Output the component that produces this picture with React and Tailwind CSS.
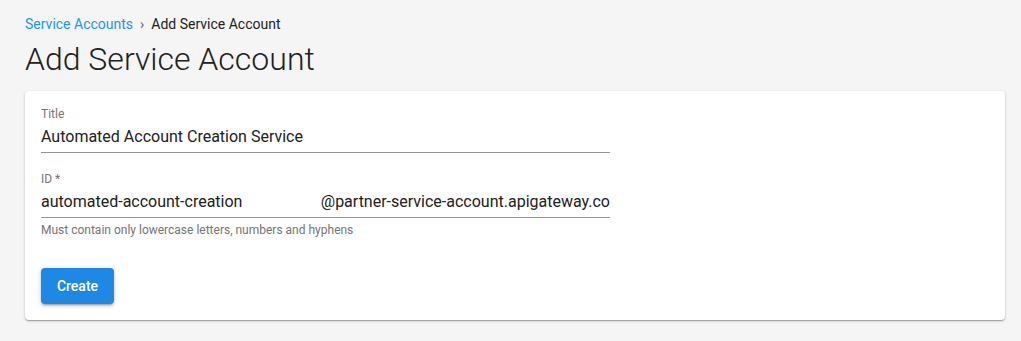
import React, { useState } from 'react';

const font = { fontFamily: 'Roboto, "Helvetica Neue", Arial, sans-serif' };

const Field = ({ label, value, onChange, adornment, helper }) => (
  <div className="w-[569px]">
    <div className="text-[12px] leading-[14px] text-[#757575]">{label}</div>
    <div className="flex h-[32px] items-start border-b border-[#949494] pt-[6px]">
      <input
        value={value}
        onChange={onChange}
        className="min-w-0 flex-1 bg-transparent text-[16px] leading-[19px] text-[#212121] outline-none"
      />
      {adornment && (
        <span className="text-[16px] leading-[19px] text-[#212121] whitespace-nowrap">{adornment}</span>
      )}
    </div>
    {helper && <div className="mt-[5px] text-[12px] leading-[14px] text-[#757575]">{helper}</div>}
  </div>
);

const App = () => {
  const [title, setTitle] = useState('Automated Account Creation Service');
  const [id, setId] = useState('automated-account-creation');

  return (
    <div style={font} className="min-h-[341px] bg-[#f5f5f5] pl-[25px] pr-[16px] pt-[14px]">
      <nav className="flex items-center text-[14px] leading-[20px]">
        <a className="text-[#2196f3]">Service Accounts</a>
        <span className="mx-[7px] text-[#616161]">›</span>
        <span className="text-[#212121]">Add Service Account</span>
      </nav>
      <h1 className="mt-[5px] text-[32px] leading-[40px] font-light text-[#212121]">
        Add Service Account
      </h1>
      <div className="mt-[12px] rounded-[4px] bg-white px-4 pt-4 pb-4 shadow-[0_1px_3px_rgba(0,0,0,0.2),0_1px_1px_rgba(0,0,0,0.14),0_2px_1px_-1px_rgba(0,0,0,0.12)]">
        <Field label="Title" value={title} onChange={(e) => setTitle(e.target.value)} />
        <div className="mt-[19px]">
          <Field
            label="ID *"
            value={id}
            onChange={(e) => setId(e.target.value)}
            adornment="@partner-service-account.apigateway.co"
            helper="Must contain only lowercase letters, numbers and hyphens"
          />
        </div>
        <button className="mt-[31px] h-[36px] w-[73px] rounded-[4px] bg-[#1e88e5] text-[14px] font-medium text-white shadow-[0_1px_5px_rgba(0,0,0,0.2),0_2px_2px_rgba(0,0,0,0.14),0_3px_1px_-2px_rgba(0,0,0,0.12)]">
          Create
        </button>
      </div>
    </div>
  );
};

export default App;
